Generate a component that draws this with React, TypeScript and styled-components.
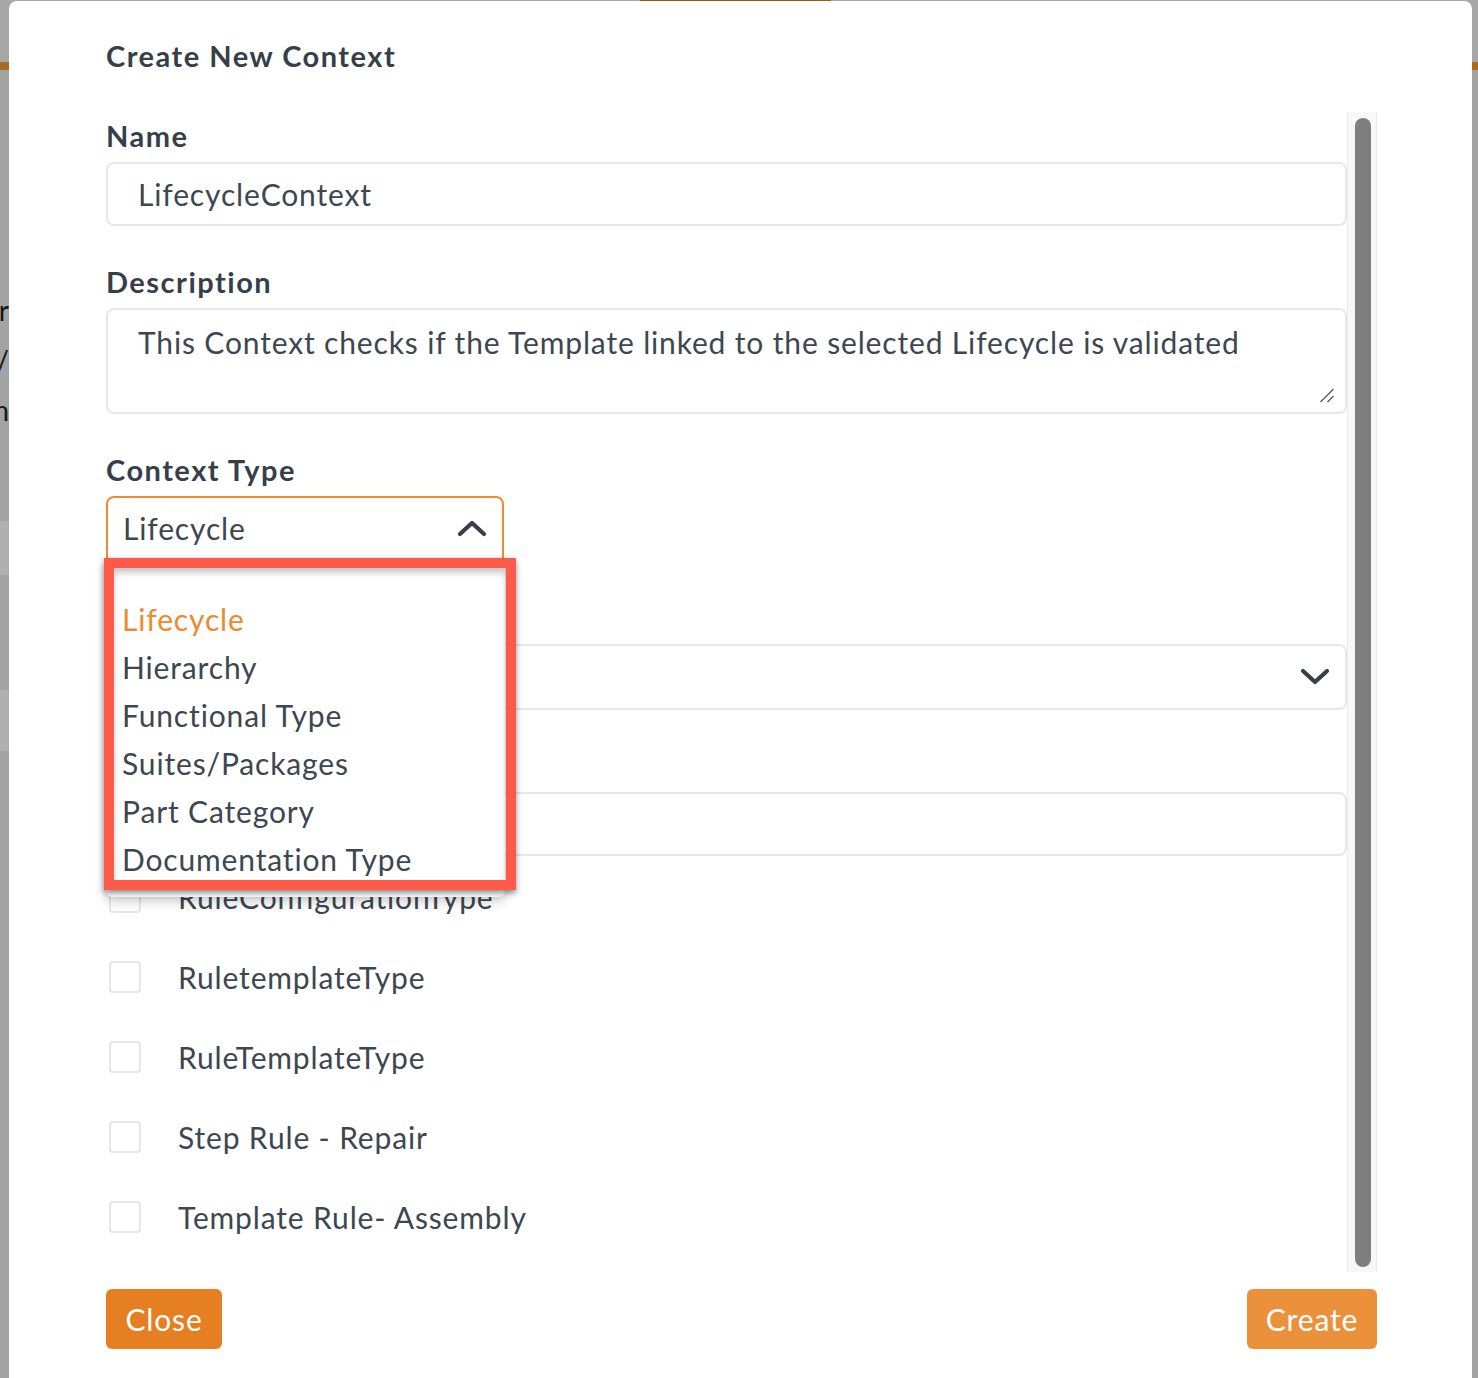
import React from "react";
import styled, { createGlobalStyle } from "styled-components";

const GlobalStyle = createGlobalStyle`
  html, body { margin: 0; padding: 0; }
  body {
    font-family: Lato, "Noto Sans", sans-serif;
    background: #ececec;
    overflow: hidden;
  }
  * { box-sizing: border-box; }
`;

const TEXT = "#3c4751";
const HEAD = "#363f48";
const ORANGE = "#e67e22";
const SPACING = "0.85px";
const BOLD_SPACING = "1.5px";

/* ---------- page behind the modal ---------- */
const BackgroundPage = styled.div`
  width: 1478px;
  height: 1378px;
  background: #ececec;
  display: flex;
  flex-direction: column;
`;
const Header = styled.header`
  height: 62px;
  background: #f2f2f2;
  display: flex;
  align-items: flex-start;
`;
const ActiveTab = styled.div`
  margin-left: 640px;
  width: 191px;
  height: 4px;
  background: #e9800b;
`;
const HeaderRule = styled.div`
  height: 8px;
  background: #f59b2c;
`;
const PageBody = styled.div`
  display: flex;
  flex-direction: column;
  padding-top: 215px;
`;
const SideItem = styled.div`
  width: 9px;
  height: 50px;
  overflow: hidden;
  display: flex;
  justify-content: flex-end;
  font-size: 28px;
  line-height: 50px;
  color: #222;
  white-space: nowrap;
`;
const SideBand = styled.div<{ $h: number; $light?: boolean }>`
  width: 9px;
  height: ${(p) => p.$h}px;
  background: ${(p) => (p.$light ? "#ffffff" : "#ececec")};
`;

const Overlay = styled.div`
  position: fixed;
  inset: 0;
  background: rgba(0, 0, 0, 0.31);
`;

/* ---------- modal ---------- */
const Modal = styled.div`
  position: fixed;
  top: 1px;
  left: 9px;
  width: 1463px;
  height: 1420px;
  background: #fff;
  border-radius: 8px;
  padding: 37px 95px 0 97px;
  display: flex;
  flex-direction: column;
`;
const Title = styled.h2`
  margin: 0;
  font-size: 29px;
  line-height: 36px;
  font-weight: 700;
  letter-spacing: ${BOLD_SPACING};
  color: ${HEAD};
`;
const ScrollArea = styled.div`
  margin-top: 38px;
  height: 1160px;
  display: flex;
`;
const Content = styled.div`
  flex: 1;
  min-width: 0;
  padding-top: 6px;
  display: flex;
  flex-direction: column;
`;
const Track = styled.div`
  width: 30px;
  background: #f8f8f8;
  border-left: 1px solid #ebebeb;
  border-right: 1px solid #ebebeb;
  padding: 6px 5px 5px 7px;
  display: flex;
`;
const Thumb = styled.div`
  flex: 1;
  background: #7f7f7f;
  border-radius: 8px;
`;

const Field = styled.div<{ $gap?: number }>`
  display: flex;
  flex-direction: column;
  margin-bottom: ${(p) => p.$gap ?? 38}px;
`;
const Label = styled.label`
  font-size: 29px;
  line-height: 36px;
  font-weight: 700;
  letter-spacing: ${BOLD_SPACING};
  color: ${HEAD};
  margin-bottom: 8px;
`;
const TextInput = styled.input`
  width: 100%;
  height: 64px;
  border: 2px solid #e7e7e7;
  border-radius: 8px;
  padding: 0 30px;
  font-family: inherit;
  font-size: 30px;
  letter-spacing: ${SPACING};
  color: ${TEXT};
  background: #fff;
  outline: none;
`;
const AreaWrap = styled.div`
  position: relative;
  display: flex;
`;
const TextArea = styled.textarea`
  width: 100%;
  height: 106px;
  border: 2px solid #e7e7e7;
  border-radius: 8px;
  padding: 14px 30px;
  font-family: inherit;
  font-size: 30px;
  line-height: 36px;
  letter-spacing: ${SPACING};
  color: ${TEXT};
  background: #fff;
  resize: none;
  outline: none;
`;
const Grip = styled.svg`
  position: absolute;
  right: 12px;
  bottom: 11px;
  pointer-events: none;
`;

const SelectWrap = styled.div<{ $width?: number }>`
  position: relative;
  width: ${(p) => (p.$width ? `${p.$width}px` : "100%")};
  z-index: ${(p) => (p.$width ? 5 : 1)};
`;
const SelectBox = styled.div<{ $open?: boolean }>`
  height: ${(p) => (p.$open ? 64 : 66)}px;
  border: 2px solid ${(p) => (p.$open ? "#ee8b2f" : "#e7e7e7")};
  border-radius: ${(p) => (p.$open ? "8px 8px 0 0" : "8px")};
  display: flex;
  align-items: center;
  justify-content: space-between;
  padding: 0 15px 0 15px;
  font-size: 30px;
  letter-spacing: ${SPACING};
  color: ${TEXT};
  background: #fff;
`;
const Menu = styled.ul`
  position: absolute;
  top: 100%;
  left: 0;
  width: 399px;
  height: 337px;
  margin: 0;
  list-style: none;
  background: #fff;
  border-radius: 0 0 6px 6px;
  box-shadow: 0 4px 12px rgba(0, 0, 0, 0.22);
  padding: 35px 0 0 16px;
`;
const MenuItem = styled.li<{ $active?: boolean }>`
  font-size: 30px;
  line-height: 48px;
  letter-spacing: ${SPACING};
  color: ${(p) => (p.$active ? "#ec8a2e" : TEXT)};
  white-space: nowrap;
`;
const Highlight = styled.div`
  position: absolute;
  top: calc(100% - 2px);
  left: -2px;
  width: 412px;
  height: 332px;
  border: 10px solid #fd5a4c;
  box-shadow: 0 3px 6px rgba(0, 0, 0, 0.45), inset 0 5px 6px rgba(0, 0, 0, 0.22);
  pointer-events: none;
`;

const CheckList = styled.div`
  margin-top: 1px;
  display: flex;
  flex-direction: column;
`;
const CheckRow = styled.div`
  height: 80px;
  display: flex;
  align-items: center;
  gap: 37px;
  padding-left: 3px;
  font-size: 30px;
  letter-spacing: ${SPACING};
  color: ${TEXT};
`;
const Box = styled.span`
  width: 32px;
  height: 32px;
  border: 2px solid #e6e6e6;
  border-radius: 4px;
  background: #fff;
  flex: none;
`;

const Footer = styled.div`
  margin-top: 17px;
  display: flex;
  justify-content: space-between;
`;
const Button = styled.button<{ $light?: boolean; $w: number }>`
  width: ${(p) => p.$w}px;
  height: 60px;
  border: none;
  border-radius: 6px;
  background: ${(p) => (p.$light ? "#eb913b" : ORANGE)};
  color: #fff;
  font-family: inherit;
  font-size: 30px;
  letter-spacing: ${SPACING};
  padding: 0;
`;

const Chevron = ({ up }: { up?: boolean }) => (
  <svg width="30" height="18" viewBox="0 0 30 18" fill="none">
    <path
      d={up ? "M3 15 L15 4 L27 15" : "M3 3 L15 14 L27 3"}
      stroke="#36404a"
      strokeWidth="4.2"
      strokeLinecap="round"
      strokeLinejoin="round"
    />
  </svg>
);

const options = [
  "Lifecycle",
  "Hierarchy",
  "Functional Type",
  "Suites/Packages",
  "Part Category",
  "Documentation Type",
];
const rules = [
  "RuleConfigurationType",
  "RuletemplateType",
  "RuleTemplateType",
  "Step Rule - Repair",
  "Template Rule- Assembly",
];

export default function App() {
  return (
    <>
      <GlobalStyle />
      <BackgroundPage>
        <Header>
          <ActiveTab />
        </Header>
        <HeaderRule />
        <PageBody>
          <SideItem>Error</SideItem>
          <SideItem>Suites/</SideItem>
          <SideItem>Item</SideItem>
          <SideBand $h={86} />
          <SideBand $h={54} $light />
          <SideBand $h={115} />
          <SideBand $h={61} $light />
        </PageBody>
      </BackgroundPage>
      <Overlay />
      <Modal>
        <Title>Create New Context</Title>
        <ScrollArea>
          <Content>
            <Field>
              <Label>Name</Label>
              <TextInput readOnly value="LifecycleContext" />
            </Field>
            <Field>
              <Label>Description</Label>
              <AreaWrap>
                <TextArea
                  readOnly
                  value="This Context checks if the Template linked to the selected Lifecycle is validated"
                />
                <Grip width="16" height="16" viewBox="0 0 16 16" fill="none">
                  <path
                    d="M1.5 15 L14.5 2 M8.5 15 L14.5 9"
                    stroke="#5c5c5c"
                    strokeWidth="1.4"
                  />
                </Grip>
              </AreaWrap>
            </Field>
            <Field $gap={40}>
              <Label>Context Type</Label>
              <SelectWrap $width={398}>
                <SelectBox $open>
                  <span>Lifecycle</span>
                  <Chevron up />
                </SelectBox>
                <Menu>
                  {options.map((o, i) => (
                    <MenuItem key={o} $active={i === 0}>
                      {o}
                    </MenuItem>
                  ))}
                </Menu>
                <Highlight />
              </SelectWrap>
            </Field>
            <Field>
              <Label>Lifecycle</Label>
              <SelectWrap>
                <SelectBox>
                  <span />
                  <Chevron />
                </SelectBox>
              </SelectWrap>
            </Field>
            <Field $gap={0}>
              <Label>Rules</Label>
              <TextInput readOnly value="" />
            </Field>
            <CheckList>
              {rules.map((r) => (
                <CheckRow key={r}>
                  <Box />
                  <span>{r}</span>
                </CheckRow>
              ))}
            </CheckList>
          </Content>
          <Track>
            <Thumb />
          </Track>
        </ScrollArea>
        <Footer>
          <Button $w={116}>Close</Button>
          <Button $w={130} $light>
            Create
          </Button>
        </Footer>
      </Modal>
    </>
  );
}
